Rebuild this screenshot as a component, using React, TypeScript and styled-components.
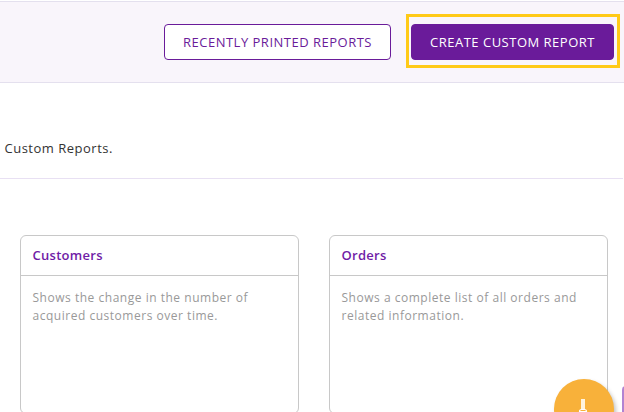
import React from "react";
import styled, { createGlobalStyle } from "styled-components";

const GlobalStyle = createGlobalStyle`
  *, *::before, *::after { box-sizing: border-box; }
  body {
    margin: 0;
    background: #fff;
    font-family: "Open Sans", sans-serif;
    overflow: hidden;
  }
`;

const Page = styled.div`
  position: relative;
  width: 624px;
  height: 412px;
  padding-top: 1px;
  overflow: hidden;
  background: #fff;
`;

const Toolbar = styled.header`
  display: flex;
  justify-content: flex-end;
  align-items: flex-start;
  gap: 15px;
  height: 82px;
  padding: 12px 4px 0 0;
  background: #f9f5fb;
  border-top: 1px solid #e4e0ee;
  border-bottom: 1px solid #e4e0ee;
`;

const Button = styled.button<{ $primary?: boolean }>`
  height: 36px;
  width: ${(p) => (p.$primary ? 203 : 227)}px;
  margin-top: ${(p) => (p.$primary ? 0 : 10)}px;
  padding: 0;
  border: 1px solid #6a1b9a;
  border-radius: 4px;
  background: ${(p) => (p.$primary ? "#6a1b9a" : "#fff")};
  color: ${(p) => (p.$primary ? "#fff" : "#6a1b9a")};
  font: 400 13px/18px "Open Sans", sans-serif;
  letter-spacing: 0.5px;
  text-transform: uppercase;
  white-space: nowrap;
`;

const Highlight = styled.div`
  height: 54px;
  padding: 7px 3px 5px 2px;
  border: 3px solid #ffca18;
`;

const Intro = styled.section`
  height: 96px;
  padding: 56px 4.5px 0;
  border-bottom: 1px solid #e8e0f3;
  margin-right: 1px;
`;

const IntroText = styled.p`
  margin: 0;
  color: #333;
  font-size: 13px;
  line-height: 18px;
  letter-spacing: 0.5px;
`;

const Cards = styled.main`
  display: grid;
  grid-template-columns: 279px 279px;
  gap: 30px;
  padding: 56px 0 0 20px;
`;

const Card = styled.article`
  height: 179px;
  border: 1px solid #c8c8c8;
  border-radius: 6px;
  background: #fff;
`;

const CardTitle = styled.h2`
  margin: 0;
  height: 40px;
  padding: 0 11.5px;
  border-bottom: 1px solid #c8c8c8;
  color: #701ca6;
  font-size: 13px;
  font-weight: 600;
  line-height: 39px;
  letter-spacing: 0.28px;
`;

const CardText = styled.p`
  margin: 0;
  padding: 13px 11.5px;
  color: #999;
  font-size: 12px;
  font-weight: 500;
  line-height: 18px;
  letter-spacing: 0.52px;
`;

const HelpBubble = styled.div`
  position: absolute;
  left: 554px;
  top: 379px;
  width: 60px;
  height: 60px;
  border-radius: 50%;
  background: #f8b13a;
  box-shadow: 2px 3px 4px rgba(0, 0, 0, 0.25);
`;

const SideTab = styled.div`
  position: absolute;
  left: 622px;
  top: 386px;
  width: 20px;
  height: 40px;
  border-radius: 4px 0 0 0;
  background: #b283d2;
`;

const reports = [
  { title: "Customers", lines: ["Shows the change in the number of", "acquired customers over time."] },
  { title: "Orders", lines: ["Shows a complete list of all orders and", "related information."] },
];

export default function App() {
  return (
    <Page>
      <GlobalStyle />
      <Toolbar>
        <Button>Recently printed reports</Button>
        <Highlight>
          <Button $primary>Create custom report</Button>
        </Highlight>
      </Toolbar>
      <Intro>
        <IntroText>Custom Reports.</IntroText>
      </Intro>
      <Cards>
        {reports.map((r) => (
          <Card key={r.title}>
            <CardTitle>{r.title}</CardTitle>
            <CardText>
              {r.lines[0]}
              <br />
              {r.lines[1]}
            </CardText>
          </Card>
        ))}
      </Cards>
      <HelpBubble>
        <svg width="60" height="60" viewBox="0 0 60 60">
          <path d="M27 20h4v10h-4z" fill="#fff3dc" />
          <path d="M25.5 38v-5.500q0-2 2-2h3q2 0 2 2v5.500M26 32.500h6" fill="none" stroke="#fff" strokeWidth="1.200" />
        </svg>
      </HelpBubble>
      <SideTab />
    </Page>
  );
}
